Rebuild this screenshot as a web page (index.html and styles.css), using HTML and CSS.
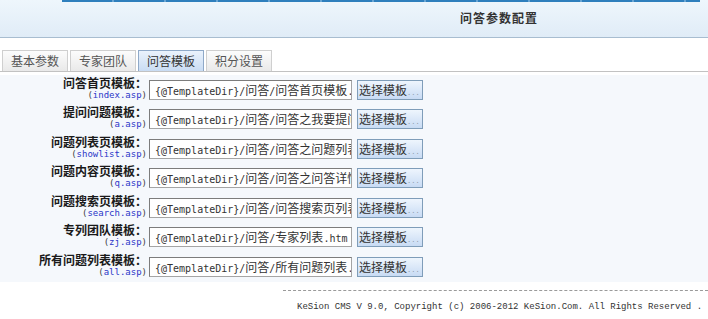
FILE: index.html
```html
<!DOCTYPE html>
<html lang="zh-CN">
<head>
<meta charset="utf-8">
<title>问答参数配置</title>
<link rel="stylesheet" href="styles.css">
</head>
<body>
<div class="header">
  <div class="menu-strip"></div>
  <div class="title">问答参数配置</div>
</div>
<div class="tabs">
  <div class="tab">基本参数</div>
  <div class="tab">专家团队</div>
  <div class="tab active">问答模板</div>
  <div class="tab">积分设置</div>
</div>
<div class="rows">
  <div class="row">
    <div class="label"><b>问答首页模板：</b><span class="file">(<i>index.asp</i>)</span></div>
    <div class="field"><span class="a">{@TemplateDir}/</span>问答<span class="a">/</span>问答首页模板<span class="a">.htm</span></div>
    <div class="btn">选择模板<span class="dots">...</span></div>
  </div>
  <div class="row">
    <div class="label"><b>提问问题模板：</b><span class="file">(<i>a.asp</i>)</span></div>
    <div class="field"><span class="a">{@TemplateDir}/</span>问答<span class="a">/</span>问答之我要提问<span class="a">.htm</span></div>
    <div class="btn">选择模板<span class="dots">...</span></div>
  </div>
  <div class="row">
    <div class="label"><b>问题列表页模板：</b><span class="file">(<i>showlist.asp</i>)</span></div>
    <div class="field"><span class="a">{@TemplateDir}/</span>问答<span class="a">/</span>问答之问题列表<span class="a">.htm</span></div>
    <div class="btn">选择模板<span class="dots">...</span></div>
  </div>
  <div class="row">
    <div class="label"><b>问题内容页模板：</b><span class="file">(<i>q.asp</i>)</span></div>
    <div class="field"><span class="a">{@TemplateDir}/</span>问答<span class="a">/</span>问答之问答详情<span class="a">.htm</span></div>
    <div class="btn">选择模板<span class="dots">...</span></div>
  </div>
  <div class="row">
    <div class="label"><b>问题搜索页模板：</b><span class="file">(<i>search.asp</i>)</span></div>
    <div class="field"><span class="a">{@TemplateDir}/</span>问答<span class="a">/</span>问答搜索页列表<span class="a">.htm</span></div>
    <div class="btn">选择模板<span class="dots">...</span></div>
  </div>
  <div class="row">
    <div class="label"><b>专列团队模板：</b><span class="file">(<i>zj.asp</i>)</span></div>
    <div class="field"><span class="a">{@TemplateDir}/</span>问答<span class="a">/</span>专家列表<span class="a">.htm</span></div>
    <div class="btn">选择模板<span class="dots">...</span></div>
  </div>
  <div class="row">
    <div class="label"><b>所有问题列表模板：</b><span class="file">(<i>all.asp</i>)</span></div>
    <div class="field"><span class="a">{@TemplateDir}/</span>问答<span class="a">/</span>所有问题列表<span class="a">.htm</span></div>
    <div class="btn">选择模板<span class="dots">...</span></div>
  </div>
</div>
<div class="footer">
  <div class="copyright">KeSion CMS V 9.0, Copyright (c) 2006-2012 KeSion.Com. All Rights Reserved .</div>
</div>
</body>
</html>
```
FILE: styles.css
```css
html, body {
  margin: 0;
  padding: 0;
  background: #ffffff;
}
body {
  font-family: "Noto Sans CJK SC", "Liberation Sans", sans-serif;
  font-size: 12px;
  color: #222;
  width: 708px;
  height: 319px;
  overflow: hidden;
}
.header {
  height: 37px;
  background: linear-gradient(#eef6fc, #e0ecf7);
  border-bottom: 1px solid #a8bdd0;
  display: flex;
  flex-direction: column;
}
.menu-strip {
  height: 2px;
  margin-left: 62px;
  margin-right: 8px;
  background: repeating-linear-gradient(90deg, #2f7fbd 0 50px, #6aa5d3 50px 52px);
}
.title {
  margin-left: 460px;
  margin-top: 8px;
  font-weight: bold;
  letter-spacing: 1px;
  color: #333;
  line-height: 16px;
}
.tabs {
  margin-top: 12px;
  padding-left: 2px;
  display: flex;
  gap: 2px;
  border-bottom: 1px solid #c2c2c2;
}
.tab {
  width: 64px;
  height: 20px;
  line-height: 20px;
  text-align: center;
  color: #555;
  background: linear-gradient(#fcfcfc, #e9e9e9);
  border: 1px solid #cfcfcf;
  border-bottom: none;
}
.tab.active {
  background: linear-gradient(#eaf2fc, #c9dcf3);
  border-color: #8fa9c8;
  color: #333;
}
.rows {
  padding-top: 3px;
  display: flex;
  flex-direction: column;
}
.row {
  height: 29.5px;
  display: flex;
  align-items: center;
  background: #f5f8fc;
}
.label {
  width: 147px;
  display: flex;
  flex-direction: column;
  align-items: flex-end;
  line-height: 13px;
  margin-top: -2px;
}
.label b {
  font-weight: bold;
  color: #1a1a1a;
}
.file {
  font-family: "DejaVu Sans Mono", monospace;
  font-size: 9px;
  color: #444;
  line-height: 13px;
}
.file i {
  font-style: normal;
  color: #2a35c8;
}
.field {
  margin-left: 2px;
  width: 196px;
  height: 18px;
  padding-left: 5px;
  line-height: 18px;
  background: #fff;
  border: 1px solid #a5a5a5;
  border-top-color: #7c7c7c;
  border-left-color: #7c7c7c;
  white-space: nowrap;
  overflow: hidden;
  color: #333;
}
.a {
  font-family: "DejaVu Sans Mono", monospace;
  font-size: 10px;
}
.btn {
  margin-left: 5px;
  width: 63px;
  height: 18px;
  line-height: 18px;
  padding-left: 1px;
  border: 1px solid #7f9db9;
  background: linear-gradient(#eef5fd, #c8dbf4);
  color: #333;
  white-space: nowrap;
  overflow: hidden;
}
.dots {
  font-family: "Liberation Mono", monospace;
  color: #8a9aa8;
  font-size: 7px;
}
.footer {
  margin-top: 8px;
  margin-left: 283px;
  border-top: 1px dashed #9a9a9a;
}
.copyright {
  margin-left: 14px;
  margin-top: 10px;
  font-family: "Liberation Mono", monospace;
  font-size: 9px;
  color: #333;
  line-height: 12px;
}
```
